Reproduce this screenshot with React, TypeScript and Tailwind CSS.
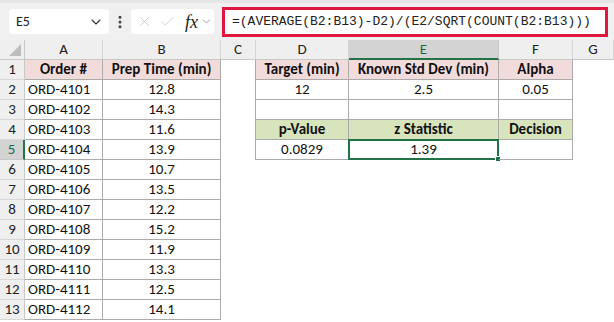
import { ChevronDown, EllipsisVertical, X, Check } from "lucide-react";

const cols = ["A", "B", "C", "D", "E", "F", "G"];

const orders: [string, string][] = [
  ["ORD-4101", "12.8"],
  ["ORD-4102", "14.3"],
  ["ORD-4103", "11.6"],
  ["ORD-4104", "13.9"],
  ["ORD-4105", "10.7"],
  ["ORD-4106", "13.5"],
  ["ORD-4107", "12.2"],
  ["ORD-4108", "15.2"],
  ["ORD-4109", "11.9"],
  ["ORD-4110", "13.3"],
  ["ORD-4111", "12.5"],
  ["ORD-4112", "14.1"],
];

const right: Record<number, string[]> = {
  1: ["Target (min)", "Known Std Dev (min)", "Alpha"],
  2: ["12", "2.5", "0.05"],
  3: ["", "", ""],
  4: ["p-Value", "z Statistic", "Decision"],
  5: ["0.0829", "1.39", ""],
};

const line = "border-[#ababab]";

function Toolbar() {
  return (
    <div className="h-10 bg-[#f0f0f0] flex items-center pl-[9px] border-t-[3px] border-[#e6e6e6]">
      <div className="w-[100px] h-[25px] bg-white rounded-[4px] flex items-center justify-between pl-[7px] pr-[5px] text-[14px] text-[#222]">
        <span>E5</span>
        <ChevronDown size={16} strokeWidth={1.6} className="text-[#333]" />
      </div>
      <div className="w-[22px] flex justify-center">
        <EllipsisVertical size={16} strokeWidth={2.6} className="text-[#444]" />
      </div>
      <div className="w-[83px] h-[25px] bg-white rounded-[4px] flex items-center pl-[5px]">
        <X size={17} strokeWidth={1.1} className="text-[#c4c4c4]" />
        <Check size={17} strokeWidth={1.1} className="text-[#c4c4c4] ml-[6px]" />
        <span className="ml-[9px] font-['Liberation_Serif',serif] italic text-[18px] text-[#222] leading-none">fx</span>
        <ChevronDown size={13} strokeWidth={1.4} className="text-[#888] ml-[2px]" />
      </div>
      <div className="ml-[8px] w-[386px] h-[30px] bg-white border-[3px] border-[#e0173f] flex items-center pl-[7px] font-['Liberation_Mono',monospace] text-[13px] text-[#222]">
        =(AVERAGE(B2:B13)-D2)/(E2/SQRT(COUNT(B2:B13)))
      </div>
    </div>
  );
}

function ColHeader() {
  return (
    <>
      <div className="relative bg-[#efefef] border-r border-b border-[#c8c8c8]">
        <div className="absolute right-[3px] bottom-[3px] w-0 h-0 border-l-[12px] border-l-transparent border-b-[12px] border-b-[#bdbdbd]" />
      </div>
      {cols.map((c) =>
        c === "E" ? (
          <div
            key={c}
            className="bg-[#d3d3d3] border-r border-[#c8c8c8] border-b-2 border-b-[#217346] flex items-center justify-center text-[#1e6b41]"
          >
            {c}
          </div>
        ) : (
          <div
            key={c}
            className="bg-[#efefef] border-r border-[#d4d4d4] border-b border-b-[#c8c8c8] flex items-center justify-center text-[#222]"
          >
            {c}
          </div>
        )
      )}
    </>
  );
}

function Row({ n }: { n: number }) {
  const o = orders[n - 2];
  const r = right[n];
  const rowHead =
    n === 5
      ? "bg-[#d3d3d3] border-r-2 border-r-[#217346] text-[#1e6b41] border-b border-b-[#c8c8c8]"
      : "bg-[#efefef] border-r border-r-[#c8c8c8] text-[#222] border-b border-b-[#d8d8d8]";
  const head = n === 1 ? "bg-[#f2dcdb] font-bold" : n === 4 ? "bg-[#d8e4bc] font-bold" : "";
  return (
    <>
      <div className={`${rowHead} flex items-center justify-center`}>{n}</div>
      {n === 1 ? (
        <>
          <div className={`border-r border-b ${line} bg-[#f2dcdb] font-bold flex items-center justify-center`}>Order #</div>
          <div className={`border-r border-b ${line} bg-[#f2dcdb] font-bold flex items-center justify-center`}>Prep Time (min)</div>
        </>
      ) : (
        <>
          <div className={`border-r border-b ${line} flex items-center pl-[3px]`}>{o[0]}</div>
          <div className={`border-r border-b ${line} flex items-center justify-center`}>{o[1]}</div>
        </>
      )}
      <div className={r ? `border-r ${line}` : ""} />
      {r ? (
        r.map((v, i) => (
          <div
            key={i}
            className={`relative border-r border-b ${line} ${head} flex items-center justify-center`}
          >
            {v}
            {n === 5 && i === 1 && (
              <div className="absolute -left-px -top-px -right-px -bottom-px border-2 border-[#217346]">
                <div className="absolute -right-[4px] -bottom-[4px] w-[6px] h-[6px] bg-[#217346] border border-white" />
              </div>
            )}
          </div>
        ))
      ) : (
        <>
          <div />
          <div />
          <div />
        </>
      )}
      <div />
    </>
  );
}

export default function App() {
  const rows = Array.from({ length: 13 }, (_, i) => i + 1);
  return (
    <div className="w-[614px] h-[322px] bg-white overflow-hidden font-['Carlito','Lato',sans-serif] text-[15px] text-[#111]">
      <Toolbar />
      <div className="grid grid-cols-[25px_78px_118px_35px_93px_150px_74px_1fr] auto-rows-[20px] leading-none">
        <ColHeader />
        {rows.map((n) => (
          <Row key={n} n={n} />
        ))}
      </div>
    </div>
  );
}
